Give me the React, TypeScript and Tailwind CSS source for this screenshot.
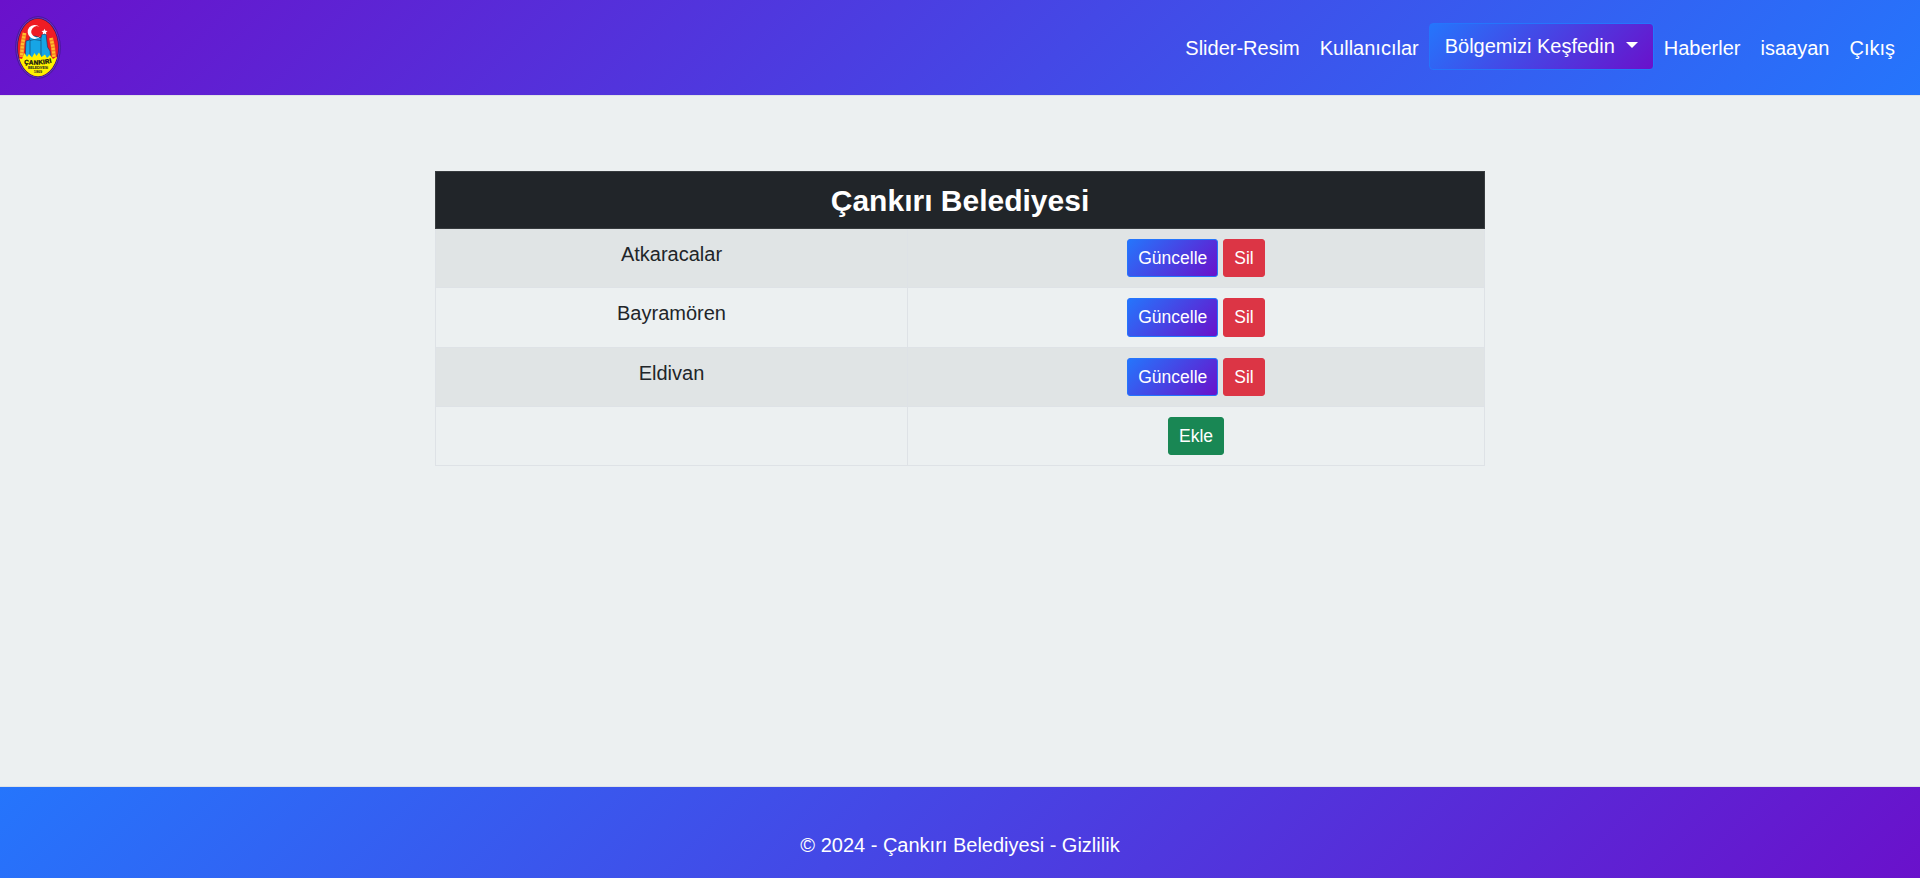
const regions = ["Atkaracalar", "Bayramören", "Eldivan"];

const smallButton =
  "inline-block cursor-pointer rounded-[3px] border px-[10px] py-[5px] align-middle text-[17.5px] leading-[26.25px] text-white";
const navLink = "block p-[10px]";

function Emblem() {
  return (
    <svg viewBox="0 0 46 63" className="h-[63px] w-[46px]" aria-hidden="true">
      <defs>
        <clipPath id="oval">
          <ellipse cx="23" cy="31.5" rx="20.2" ry="28.700" />
        </clipPath>
        <path id="nameArc" d="M8.500 48 Q23 50 37.500 46.500" />
      </defs>
      <ellipse cx="23" cy="31.5" rx="22.3" ry="30.8" fill="#6a2fc4" stroke="#40148a" strokeWidth=".8" />
      <ellipse cx="23" cy="31.5" rx="20.800" ry="29.300" fill="#2a1a50" />
      <g clipPath="url(#oval)">
        <rect width="46" height="63" fill="#ee1c24" />
        <path d="M9.500 17 L7.500 28 L6.500 41M36 22 L38 31 L39 41" fill="none" stroke="#f58220" strokeWidth="4.200" />
        <path d="M9.500 17 L7.500 28 L6.500 41M36 22 L38 31 L39 41" fill="none" stroke="#ffc02e" strokeWidth="3.200" strokeDasharray="2 1.400" />
        <path
          d="M10 45 L11 25 L14.500 24 L15 21 L20 20 L26 22 L27 18.500 L31 18 L32.500 31 L35 35 L36 45Z"
          fill="#16a5e6"
          stroke="#17375e"
          strokeWidth=".6"
        />
        <path d="M15 24v17M26 22v19M15 24.500 L19 23.500 L26 24.500" fill="none" stroke="#17375e" strokeWidth=".6" />
        <path
          d="M0 42 L5 42.500 L7 43 L9.500 37 L12 41 L14 38 L17 41.500 L19.500 37 L21.500 40 L24 36.500 L26.500 41 L30 38.500 L32 42 L35 39 L38 43 L41 41 L46 42 V63 H0Z"
          fill="#fff200"
        />
      </g>
      <path d="M24.500 10.800 A7 7 0 1 0 25.500 19.800 A5.500 5.500 0 1 1 24.500 10.800Z" fill="#fff" />
      <path d="M29.500 12.800l.9 2 2.100.2-1.600 1.400.5 2.100-1.900-1.100-1.900 1.100.5-2.100-1.600-1.400 2.100-.2z" fill="#fff" />
      <text textLength="28" fontSize="6.300" fontWeight="bold" fontFamily="Liberation Sans" fill="#111" stroke="#111" strokeWidth=".3">
        <textPath href="#nameArc" startOffset=".5">ÇANKIRI</textPath>
      </text>
      <text x="23" y="53.400" textAnchor="middle" textLength="20" fontSize="3.800" fontWeight="bold" fontFamily="Liberation Sans" fill="#222">BELEDİYESİ</text>
      <text x="23" y="57.200" textAnchor="middle" fontSize="3.800" fontWeight="bold" fontFamily="Liberation Sans" fill="#222">1869</text>
    </svg>
  );
}

export default function App() {
  return (
    <div className="flex h-[878px] flex-col bg-[#ecf0f1] font-['Liberation_Sans',Arial,sans-serif] text-[20px] leading-[30px] text-[#212529]">
      <header className="flex h-[96px] shrink-0 items-center justify-between border-b border-[#dee2e6] bg-[linear-gradient(135deg,#6a11cb_0%,#2575fc_100%)] px-[15px] text-white">
        <Emblem />
        <nav className="flex items-start">
          <a className={navLink}>Slider-Resim</a>
          <a className={navLink}>Kullanıcılar</a>
          <button className="flex items-center rounded-[4px] border border-[#2575fc] bg-[linear-gradient(135deg,#2575fc_0%,#6a11cb_100%)] px-[15px] py-[7.5px]">
            Bölgemizi Keşfedin
            <span className="mt-[-3px] ml-[11px] border-x-[6px] border-t-[6px] border-x-transparent border-t-white" />
          </button>
          <a className={navLink}>Haberler</a>
          <a className={navLink}>isaayan</a>
          <a className={navLink}>Çıkış</a>
        </nav>
      </header>

      <main className="flex flex-1 justify-center pt-[75px]">
        <table className="w-[1050px] table-fixed border-collapse self-start text-center">
          <colgroup>
            <col className="w-[472px]" />
            <col />
          </colgroup>
          <thead>
            <tr className="h-[57px]">
              <th colSpan={2} className="border border-[#373b3e] bg-[#212529] p-0 pt-[2px] text-[30px] leading-[36px] font-bold text-white">
                Çankırı Belediyesi
              </th>
            </tr>
          </thead>
          <tbody>
            {regions.map((name) => (
              <tr key={name} className="h-[59.25px] odd:bg-[#e0e4e5]">
                <td className="border border-[#dee2e6] p-[10px] align-top">{name}</td>
                <td className="border border-[#dee2e6] px-[10px] pt-[10px] align-top">
                  <div className="flex justify-center gap-[5px]">
                    <button className={`${smallButton} border-[#2575fc] bg-[linear-gradient(135deg,#2575fc_0%,#6a11cb_100%)]`}>Güncelle</button>
                    <button className={`${smallButton} border-[#dc3545] bg-[#dc3545]`}>Sil</button>
                  </div>
                </td>
              </tr>
            ))}
            <tr className="h-[59.25px]">
              <td className="border border-[#dee2e6]" />
              <td className="border border-[#dee2e6] px-[10px] pt-[10px] align-top">
                <div className="flex justify-center">
                  <button className={`${smallButton} border-[#198754] bg-[#198754]`}>Ekle</button>
                </div>
              </td>
            </tr>
          </tbody>
        </table>
      </main>

      <footer className="flex h-[92px] shrink-0 items-start justify-center border-t border-[#dee2e6] bg-[linear-gradient(135deg,#2575fc_0%,#6a11cb_100%)] pt-[43px] text-white">
        <p>© 2024 - Çankırı Belediyesi - Gizlilik</p>
      </footer>
    </div>
  );
}
